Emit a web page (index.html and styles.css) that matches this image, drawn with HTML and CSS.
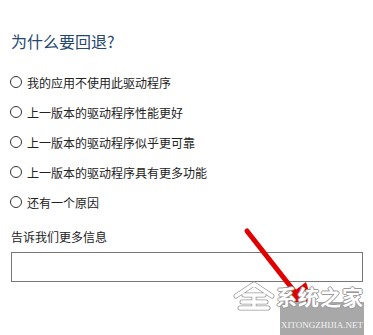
FILE: index.html
```html
<!DOCTYPE html>
<html lang="zh-CN">
<head>
  <meta charset="UTF-8" />
  <title>回退驱动程序包</title>
  <link rel="stylesheet" href="styles.css">
</head>
<body>
  <div class="dialog">
    <h1>为什么要回退?</h1>

    <div class="reasons">
      <label class="reason"><span class="radio"></span>我的应用不使用此驱动程序</label>
      <label class="reason"><span class="radio"></span>上一版本的驱动程序性能更好</label>
      <label class="reason"><span class="radio"></span>上一版本的驱动程序似乎更可靠</label>
      <label class="reason"><span class="radio"></span>上一版本的驱动程序具有更多功能</label>
      <label class="reason"><span class="radio"></span>还有一个原因</label>
    </div>

    <div class="more-label">告诉我们更多信息</div>
    <div class="more-box"></div>

    <div class="buttons">
      <span class="btn-text">是</span>
    </div>
  </div>

  <!-- red arrow -->
  <svg class="arrow" width="373" height="335" viewBox="0 0 373 335">
    <line x1="247" y1="231" x2="298" y2="296" stroke="#e00000" stroke-width="5" stroke-linecap="round"/>
    <polygon points="285,298 306,282 318,319" fill="#e00000"/>
  </svg>

  <!-- watermark -->
  <div class="wm-box">XITONGZHIJIA.NET</div>
  <div class="wm">
    <svg class="wm-logo" width="42" height="30" viewBox="0 0 42 30">
      <path d="M3 15 L21 3 L39 15 M11 14 L31 14 M9 21 L33 21 M21 14 L21 27 M7 27 L35 27" fill="none" stroke="#999" stroke-width="5" stroke-linejoin="round" stroke-linecap="round"/>
      <path d="M3 15 L21 3 L39 15 M11 14 L31 14 M9 21 L33 21 M21 14 L21 27 M7 27 L35 27" fill="none" stroke="#fff" stroke-width="3.4" stroke-linejoin="round" stroke-linecap="round"/>
    </svg>
    <span class="wm-title">系统之家</span>
  </div>
</body>
</html>
```

FILE: styles.css
```css
body {
  margin: 0;
  background: #fff;
  font-family: "Noto Sans CJK SC", "Noto Sans", sans-serif;
  color: #222;
  width: 373px;
  height: 335px;
  overflow: hidden;
  position: relative;
}
.dialog {
  padding: 31px 10px 0 11px;
}
h1 {
  margin: 0;
  font-size: 16px;
  line-height: 20px;
  font-weight: normal;
  color: #26486e;
}
.reasons {
  margin-top: 16px;
  display: flex;
  flex-direction: column;
}
.reason {
  display: flex;
  align-items: center;
  gap: 5px;
  height: 30px;
  font-size: 12px;
  color: #222;
}
.radio {
  width: 10px;
  height: 10px;
  border: 1px solid #333;
  border-radius: 50%;
  flex: none;
  margin-left: -1px;
}
.more-label {
  margin-top: 10px;
  font-size: 12px;
  line-height: 20px;
}
.more-box {
  margin-top: 5px;
  height: 28px;
  border: 1px solid #777;
}
.buttons {
  display: flex;
  justify-content: flex-end;
  padding: 20px 50px 0 0;
}
.btn-text {
  font-size: 11px;
  line-height: 14px;
  color: #444;
}
.arrow {
  position: absolute;
  left: 0;
  top: 0;
}
.wm {
  position: absolute;
  left: 233px;
  top: 281px;
  display: flex;
  align-items: center;
  gap: 1px;
}
.wm-title {
  font-size: 21px;
  font-weight: bold;
  color: #fff;
  letter-spacing: 1px;
  text-shadow: 1px 0 0 #9a9a9a, -1px 0 0 #9a9a9a, 0 1px 0 #9a9a9a, 0 -1px 0 #9a9a9a;
}
.wm-box {
  position: absolute;
  left: 280px;
  top: 302px;
  width: 84px;
  height: 33px;
  background: #a8a8a8;
  color: #f2f2f2;
  font-family: "Liberation Serif", serif;
  font-size: 9px;
  line-height: 12px;
  text-align: center;
  padding-top: 17px;
  box-sizing: border-box;
}
```
